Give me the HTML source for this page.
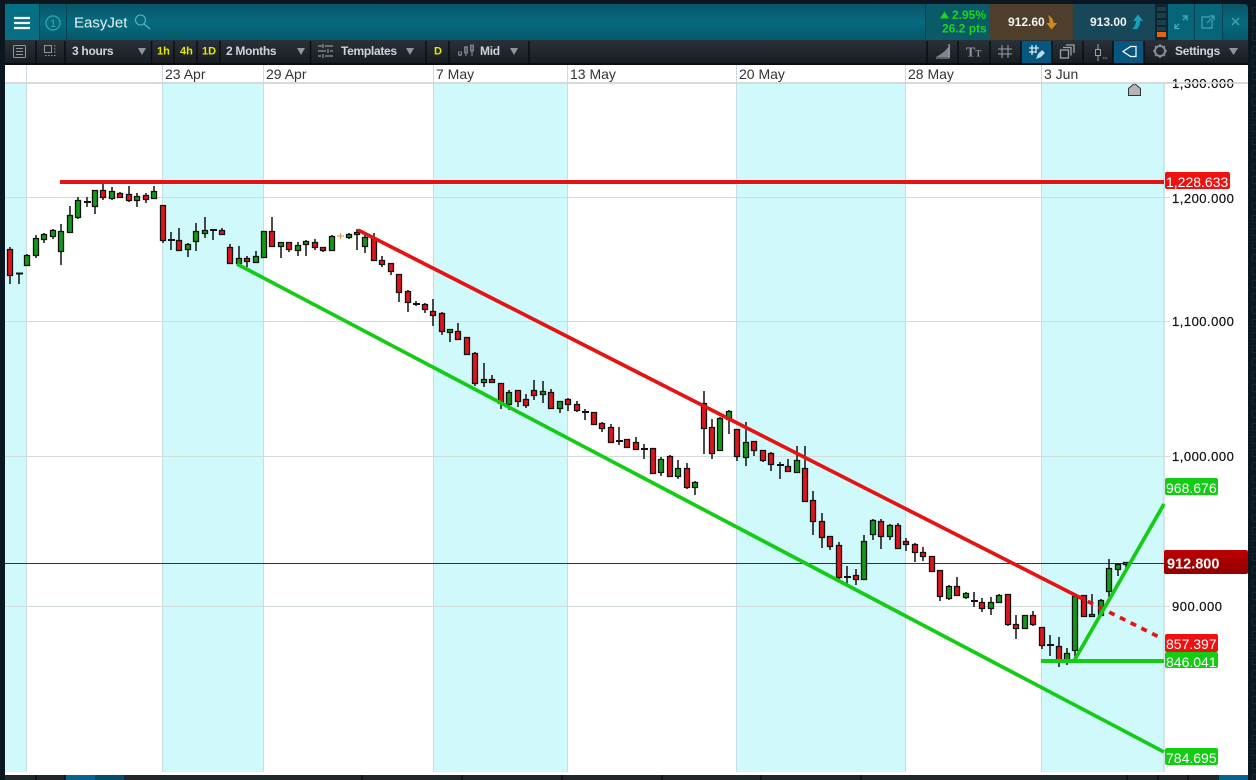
<!DOCTYPE html>
<html><head><meta charset="utf-8"><title>EasyJet</title>
<style>
html,body{margin:0;padding:0;background:#0a1720;width:1256px;height:780px;overflow:hidden}
svg{display:block;font-family:"Liberation Sans",sans-serif}
.tb{fill:#d0d4d8;font-size:12px;font-weight:bold;letter-spacing:-.3px}
.y{fill:#e8e800;font-size:11px;font-weight:bold}
.dt{fill:#333;font-size:14px}
.ax{fill:#111;font-size:13px;letter-spacing:.5px;stroke:#111;stroke-width:.2px}
.lb{fill:#fff;font-size:14px}
.sep{stroke:#0b0f12;stroke-width:1.5}
</style></head><body>
<svg width="1256" height="780" viewBox="0 0 1256 780" xmlns="http://www.w3.org/2000/svg">
<defs>
<linearGradient id="hd" x1="0" y1="0" x2="0" y2="1"><stop offset="0" stop-color="#0a5565"/><stop offset=".5" stop-color="#066b80"/><stop offset="1" stop-color="#05596b"/></linearGradient>
<linearGradient id="tbg" x1="0" y1="0" x2="0" y2="1"><stop offset="0" stop-color="#2a3138"/><stop offset="1" stop-color="#171c21"/></linearGradient>
<linearGradient id="cur" x1="0" y1="0" x2="0" y2="1"><stop offset="0" stop-color="#bd0000"/><stop offset="1" stop-color="#8f0000"/></linearGradient>
<pattern id="sq" x="1250" y="4" width="6" height="13" patternUnits="userSpaceOnUse"><rect x="2.500" y="3.500" width="6" height="7" fill="none" stroke="#16262f"/></pattern>
</defs>
<rect width="1256" height="780" fill="#0a1720"/>
<rect x="1250" y="4" width="6" height="776" fill="url(#sq)"/>

<!-- header -->
<path d="M9 4H1244q4 0 4 4V40H5V8q0-4 4-4z" fill="url(#hd)"/>
<rect x="5" y="4" width="34" height="36" fill="#076f84"/>
<path d="M39.500 4V40M66.500 4V40" stroke="#07404e"/>
<path d="M14 18H30M14 23H30M14 28H30" stroke="#f2f7f8" stroke-width="2.200"/>
<circle cx="53" cy="23" r="7" fill="none" stroke="#3aa6b8" stroke-width="1.200"/>
<text x="53" y="27" font-size="11" fill="#3aa6b8" text-anchor="middle">1</text>
<text x="74" y="27.500" font-size="15" fill="#e4f2f4">EasyJet</text>
<circle cx="140.500" cy="20" r="5" fill="none" stroke="#5fb4c4" stroke-width="1.100"/>
<path d="M144 24L150 29" stroke="#5fb4c4" stroke-width="1.200"/>

<rect x="925" y="4" width="65" height="36" fill="#0b5a68"/>
<path d="M925.500 4V40" stroke="#07404e"/>
<path d="M940 18.500l4.500-7 4.500 7z" fill="#18d818"/>
<text x="952" y="19" font-size="12" font-weight="bold" fill="#18d818">2.95%</text>
<text x="942" y="32.500" font-size="12" font-weight="bold" fill="#18d818">26.2 pts</text>
<rect x="990" y="4" width="83" height="36" fill="#4e3f2c"/>
<text x="1008" y="26" font-size="12" font-weight="bold" fill="#f4f4f4">912.60</text>
<path d="M1048 15q5 3 5.500 7v1h3.500l-5.500 6.500-5-6.500h3v-1q0-3-1.500-7z" fill="#d08a1e"/>
<rect x="1073" y="4" width="82" height="36" fill="#17485a"/>
<text x="1090" y="26" font-size="12" font-weight="bold" fill="#f4f4f4">913.00</text>
<path d="M1132 29q3.500-3 4-7v-1h-3l5-6.500 5 6.500h-3v1q0 4-3 7z" fill="#1a9fb8"/>
<rect x="1155" y="4" width="13" height="36" fill="#0f2630"/>
<path d="M1157 7h9v4h-9zM1157 13h9v5h-9zM1157 20h9v5h-9zM1157 27h9v4h-9z" fill="#1c3f4c"/>
<rect x="1157" y="32" width="9" height="5" fill="#e8640c"/>
<rect x="1168" y="4" width="26" height="36" fill="#07657a"/>
<rect x="1194" y="4" width="28" height="36" fill="#07657a"/>
<path d="M1194.500 4V40M1222.500 4V40" stroke="#07404e"/>
<path d="M1175 28l4-4M1175 24v4.500h4.500M1187 16l-4 4M1187 20.500V16h-4.500" fill="none" stroke="#3fb0c4" stroke-width="1.300"/>
<path d="M1212 20v8h-10V17h8" fill="none" stroke="#3fa6b8" stroke-width="1.200"/>
<path d="M1207 23l7-7M1209.500 16h4.500v4.500" fill="none" stroke="#3fa6b8" stroke-width="1.200"/>
<path d="M1232 18l7 7M1239 18l-7 7" stroke="#3fa6b8" stroke-width="1.400"/>

<!-- toolbar -->
<rect x="5" y="40" width="1243" height="24" fill="url(#tbg)"/>
<rect x="5" y="63" width="1243" height="2" fill="#0a0e11"/>
<rect x="1021" y="41" width="31" height="22" fill="#06577f"/>
<rect x="1113" y="41" width="31" height="22" fill="#06577f"/>
<path class="sep" d="M36 41V63M65 41V63M151.500 41V63M174 41V63M197 41V63M220 41V63M310.500 41V63M426 41V63M449 41V63M529 41V63M927 41V63M958 41V63M990 41V63M1021 41V63M1052 41V63M1083 41V63M1113 41V63M1144 41V63"/>
<rect x="13.500" y="45.500" width="12" height="12" fill="none" stroke="#8f979d" rx="1"/>
<path d="M16 48.500h7M16 51.500h7M16 54.500h7" stroke="#8f979d"/>
<rect x="44.500" y="45.500" width="7" height="7" fill="none" stroke="#8f979d"/>
<path d="M54 46h3M54 49h3M54 52h3M45 55.500h12" stroke="#8f979d" stroke-dasharray="1.500 1.500"/>
<text class="tb" x="72" y="55">3 hours</text>
<path d="M138 48h8l-4 7z" fill="#8f979d"/>
<text class="y" x="157" y="54.500">1h</text>
<text class="y" x="180" y="54.500">4h</text>
<text class="y" x="202" y="54.500">1D</text>
<text class="tb" x="226" y="55">2 Months</text>
<path d="M297 48h8l-4 7z" fill="#8f979d"/>
<path d="M318 46h4M325 46h8M318 51h8M330 51h3M318 56h3M325 56h8" stroke="#8f979d" stroke-width="1.200"/>
<path d="M323 44v4M328 49v4M323 54v4" stroke="#8f979d" stroke-width="1.200"/>
<text class="tb" x="341" y="55">Templates</text>
<path d="M406 48h8l-4 7z" fill="#8f979d"/>
<text class="y" x="434" y="54.500">D</text>
<path d="M460 56v-2M466 56v-10M472 56v-11" stroke="#8f979d"/>
<rect x="458.500" y="52" width="3" height="3" fill="none" stroke="#8f979d" stroke-width=".8"/>
<rect x="464.500" y="47" width="3" height="6" fill="none" stroke="#8f979d" stroke-width=".8"/>
<rect x="470.500" y="45" width="3" height="6" fill="none" stroke="#8f979d" stroke-width=".8"/>
<text class="tb" x="480" y="55">Mid</text>
<path d="M510 48h8l-4 7z" fill="#8f979d"/>
<path d="M936 57h14V44q-3 7-14 13z" fill="#7d858b"/>
<path d="M949 44V58H936" fill="none" stroke="#9aa2a8"/>
<text x="966" y="56.500" font-size="14" font-weight="bold" fill="#8b9399" font-family="Liberation Serif">T<tspan font-size="9">T</tspan></text>
<path d="M1002 45v13M1008 45v13M998 49h14M998 54h14" stroke="#9aa2a8" stroke-width="1"/>
<path d="M1032 45v10M1036 45v8M1029 48h10M1029 52h7" stroke="#fff" stroke-width="1.100"/>
<path d="M1036 59l2-5 4-4 3 3-4 4z" fill="#b9dcec"/>
<rect x="1060.500" y="50" width="8" height="8" fill="none" stroke="#9aa2a8" stroke-width="1.300"/>
<path d="M1063 47.500h8v8M1066 45h8v8" fill="none" stroke="#9aa2a8" stroke-width="1.300"/>
<path d="M1098 44v5M1098 56v5" stroke="#9aa2a8"/>
<rect x="1095.500" y="49.500" width="5" height="6" fill="none" stroke="#9aa2a8"/>
<path d="M1103 58h4" stroke="#9aa2a8" stroke-dasharray="1.500 1"/>
<path d="M1130.500 46.500H1136V56.500H1130.500L1123 51.500z" fill="none" stroke="#fff" stroke-width="1.200"/>
<circle cx="1160" cy="51" r="5" fill="none" stroke="#868e94" stroke-width="2"/>
<path d="M1160 44v2M1160 56v2M1153 51h2M1165 51h2M1155 46l1.500 1.500M1165 46l-1.500 1.500M1155 56l1.500-1.500M1165 56l-1.500-1.500" stroke="#868e94" stroke-width="1.500"/>
<text class="tb" x="1175" y="55">Settings</text>
<path d="M1229 48h9l-4.500 7z" fill="#8f979d"/>

<!-- chart background -->
<rect x="5" y="65" width="1243" height="710" fill="#fff"/>
<g fill="#d0f9fc">
<rect x="5" y="84" width="21" height="688"/>
<rect x="162" y="84" width="101" height="688"/>
<rect x="433" y="84" width="134" height="688"/>
<rect x="736" y="84" width="169" height="688"/>
<rect x="1041" y="84" width="123" height="688"/>
</g>
<path d="M26.500 65V772M162.500 65V772M263.500 65V772M433.500 65V772M567.500 65V772M736.500 65V772M905.500 65V772M1041.500 65V772" stroke="#c9dde0" stroke-width="1"/>
<path d="M1164 83V772" stroke="#c9dde0" stroke-width="1.500"/>
<path d="M5 197.500H1170M5 321.500H1170M5 456.500H1170M5 606.500H1170" stroke="#d3dcdc" stroke-width="1"/>
<path d="M5 563.500H1164" stroke="#333" stroke-width="1"/>

<!-- dates -->
<text class="dt" x="165" y="79">23 Apr</text>
<text class="dt" x="266" y="79">29 Apr</text>
<text class="dt" x="436" y="79">7 May</text>
<text class="dt" x="570" y="79">13 May</text>
<text class="dt" x="739" y="79">20 May</text>
<text class="dt" x="908" y="79">28 May</text>
<text class="dt" x="1044" y="79">3 Jun</text>
<path d="M1128.500 95.500V88.500L1134.500 83.500L1140.500 88.500V95.500z" fill="#b5b5b5" stroke="#333" stroke-width="1"/>

<!-- axis -->
<text class="ax" x="1172" y="88">1,300.000</text>
<path d="M5 83H1248" stroke="#d2d4d4" stroke-width="1.800"/>
<text class="ax" x="1172" y="203">1,200.000</text>
<text class="ax" x="1172" y="326">1,100.000</text>
<text class="ax" x="1172" y="461">1,000.000</text>
<text class="ax" x="1172" y="611">900.000</text>

<!-- wicks -->
<path fill="none" stroke="#111" stroke-width="1.500" d="M10 247V284M19 273V284M27 254V266M36 235V258M44 233V243M53 229V239M61 224V265M70 206V233M78 197V219M87 197V207M95 190V214M103 183V200M112 187V200M120 192V198M129 186V202M137 193V207M146 193V203M154 186V199M163 205V243M171 232V250M179 228V250M188 243V257M196 223V251M205 217V238M213 229V240M222 228V235M230 244V264M239 246V265M247 256V267M256 251V263M264 231V257M272 217V246M281 242V258M289 242V252M298 242V256M306 240V256M315 239V250M323 247V252M332 235V250M349 233V239M357 229V250M365 235V253M374 233V260M382 256V267M391 263V275M399 274V302M408 290V312M416 301V306M425 303V313M433 299V326M442 312V335M450 329V342M458 323V340M467 337V354M475 352V386M484 363V387M492 375V382M501 383V409M509 390V410M518 390V407M526 394V408M534 380V400M543 381V403M551 389V408M560 401V413M568 398V411M577 401V412M585 409V420M594 412V425M602 422V432M611 424V442M619 427V445M627 439V447M636 437V449M644 444V459M653 448V474M661 457V476M670 455V477M678 460V479M687 463V489M695 481V495M704 391V454M712 419V459M720 417V450M729 410V434M737 429V461M746 422V466M754 441V456M763 450V462M771 452V471M780 462V479M788 459V472M797 446V472M805 446V502M813 491V535M822 513V548M830 536V550M839 542V580M847 566V585M856 569V585M864 535V579M873 519V540M881 519V549M890 524V540M898 523V549M906 538V551M915 543V562M923 547V561M932 556V571M940 570V601M949 585V600M957 577V596M966 592V599M974 592V607M982 598V612M991 597V615M999 594V603M1008 594V626M1016 615V639M1025 615V629M1033 611V626M1042 627V649M1050 635V656M1059 637V667M1067 648V665M1075 596V658M1084 595V617M1092 594V616M1101 599V615M1109 559V597M1118 563V576M1126 562V569"/>
<path fill="none" stroke="#111" stroke-width="2" d="M16 273.500h7M84 202h7M168 240h7M210 230h7M413 304h7M582 412h7M616 441h7M641 449h7M777 465h7M844 577h7M971 601h7M1047 645h7"/>
<path fill="none" stroke="#d9a24e" stroke-width="1.300" d="M337 236h7M340.500 233V239"/>

<!-- red bodies -->
<path fill="#e0141c" stroke="#111" stroke-width="1.300" d="M7.500 249.500h5v26h-5zM100.500 190.500h5v7h-5zM117.500 193.500h5v4h-5zM126.500 194.500h5v6h-5zM143.500 195.500h5v4h-5zM160.500 205.500h5v35h-5zM176.500 240.500h5v10h-5zM219.500 230.500h5v4h-5zM227.500 247.500h5v16h-5zM244.500 258.500h5v3h-5zM269.500 231.500h5v15h-5zM286.500 242.500h5v7h-5zM312.500 242.500h5v5h-5zM320.500 247.500h5v3h-5zM371.500 238.500h5v22h-5zM379.500 260.500h5v4h-5zM388.500 263.500h5v8h-5zM396.500 274.500h5v18h-5zM405.500 291.500h5v11h-5zM422.500 304.500h5v5h-5zM430.500 311.500h5v4h-5zM439.500 313.500h5v18h-5zM455.500 331.500h5v8h-5zM464.500 337.500h5v17h-5zM472.500 353.500h5v30h-5zM489.500 379.500h5v3h-5zM498.500 383.500h5v20h-5zM515.500 390.500h5v11h-5zM523.500 399.500h5v6h-5zM531.500 390.500h5v5h-5zM548.500 392.500h5v16h-5zM565.500 399.500h5v5h-5zM574.500 404.500h5v6h-5zM591.500 412.500h5v12h-5zM599.500 423.500h5v5h-5zM608.500 427.500h5v15h-5zM624.500 439.500h5v8h-5zM633.500 442.500h5v7h-5zM650.500 448.500h5v25h-5zM667.500 456.500h5v20h-5zM684.500 468.500h5v19h-5zM701.500 403.500h5v25h-5zM709.500 427.500h5v26h-5zM734.500 429.500h5v27h-5zM751.500 441.500h5v9h-5zM760.500 450.500h5v10h-5zM768.500 453.500h5v11h-5zM785.500 466.500h5v5h-5zM802.500 468.500h5v33h-5zM810.500 500.500h5v21h-5zM819.500 521.500h5v16h-5zM827.500 536.500h5v10h-5zM836.500 545.500h5v32h-5zM853.500 575.500h5v4h-5zM878.500 521.500h5v15h-5zM895.500 525.500h5v23h-5zM903.500 541.500h5v3h-5zM912.500 544.500h5v8h-5zM920.500 552.500h5v4h-5zM929.500 556.500h5v15h-5zM937.500 570.500h5v26h-5zM954.500 586.500h5v9h-5zM979.500 602.500h5v6h-5zM1005.500 594.500h5v30h-5zM1013.500 624.500h5v4h-5zM1030.500 615.500h5v9h-5zM1039.500 627.500h5v18h-5zM1056.500 646.500h5v14h-5zM1081.500 595.500h5v21h-5z"/>
<!-- green bodies -->
<path fill="#109a18" stroke="#111" stroke-width="1.300" d="M24.500 255.500h5v10h-5zM33.500 238.500h5v17h-5zM41.500 234.500h5v5h-5zM50.500 230.500h5v6h-5zM58.500 231.500h5v20h-5zM67.500 215.500h5v17h-5zM75.500 200.500h5v17h-5zM92.500 190.500h5v16h-5zM109.500 191.500h5v7h-5zM134.500 196.500h5v4h-5zM151.500 191.500h5v7h-5zM185.500 244.500h5v5h-5zM193.500 231.500h5v10h-5zM202.500 230.500h5v3h-5zM236.500 258.500h5v5h-5zM253.500 256.500h5v6h-5zM261.500 231.500h5v26h-5zM278.500 242.500h5v4h-5zM295.500 245.500h5v5h-5zM303.500 241.500h5v3h-5zM329.500 236.500h5v14h-5zM346.500 234.500h5v3h-5zM354.500 232.500h5v2h-5zM362.500 237.500h5v9h-5zM447.500 329.500h5v3h-5zM481.500 379.500h5v3h-5zM506.500 392.500h5v12h-5zM540.500 391.500h5v3h-5zM557.500 401.500h5v7h-5zM658.500 459.500h5v13h-5zM675.500 468.500h5v8h-5zM692.500 482.500h5v5h-5zM717.500 418.500h5v32h-5zM726.500 411.500h5v8h-5zM743.500 442.500h5v15h-5zM794.500 460.500h5v12h-5zM861.500 541.500h5v38h-5zM870.500 520.500h5v14h-5zM887.500 525.500h5v11h-5zM946.500 586.500h5v12h-5zM963.500 593.500h5v4h-5zM988.500 602.500h5v6h-5zM996.500 595.500h5v7h-5zM1022.500 615.500h5v13h-5zM1064.500 653.500h5v7h-5zM1072.500 596.500h5v54h-5zM1089.500 614.500h5v2h-5zM1098.500 600.500h5v15h-5zM1106.500 568.500h5v23h-5zM1115.500 564.500h5v5h-5zM1123.500 562.500h5v2h-5z"/>

<!-- drawn lines -->
<g fill="none" stroke-width="3.700">
<path d="M60 182H1164" stroke="#e41414" stroke-width="4"/>
<path d="M358 230L1077 596" stroke="#e41414"/>
<path d="M1077 596L1161 638" stroke="#e41414" stroke-dasharray="6 6"/>
<path d="M237 264L1164 752" stroke="#14cc14"/>
<path d="M1041 661H1164" stroke="#14cc14" stroke-width="4"/>
<path d="M1074 661L1164 504" stroke="#14cc14"/>
</g>

<!-- price labels -->
<rect x="1165" y="172" width="65" height="17" rx="2" fill="#ee1111"/>
<text class="lb" x="1166" y="187">1,228.633</text>
<rect x="1165" y="478" width="53" height="17" rx="2" fill="#14cc14"/>
<text class="lb" x="1166" y="493">968.676</text>
<rect x="1164" y="550" width="84" height="24" rx="2" fill="url(#cur)"/>
<text x="1167" y="568.500" font-size="14.500" font-weight="bold" fill="#fff">912.800</text>
<rect x="1165" y="634" width="53" height="18" rx="2" fill="#ee1111"/>
<text class="lb" x="1166" y="649">857.397</text>
<rect x="1165" y="652" width="53" height="16" rx="2" fill="#14cc14"/>
<text class="lb" x="1166" y="667">846.041</text>
<rect x="1165" y="748" width="53" height="17" rx="2" fill="#14cc14"/>
<text class="lb" x="1166" y="763">784.695</text>

<!-- bottom toolbar -->
<rect x="5" y="775" width="1243" height="5" fill="#20272d"/>
<rect x="65" y="775" width="30" height="5" fill="#06648c"/>
<rect x="95" y="775" width="29" height="5" fill="#064d6c"/>
<rect x="1219" y="775" width="29" height="5" fill="#06648c"/>
<path d="M36 775v5M65 775v5M362 775v5M462 775v5M562 775v5M662 775v5M761 775v5M861 775v5M1127 775v5M1158 775v5M1188 775v5" stroke="#0b0f12" stroke-width="1.500"/>
</svg>
</body></html>
